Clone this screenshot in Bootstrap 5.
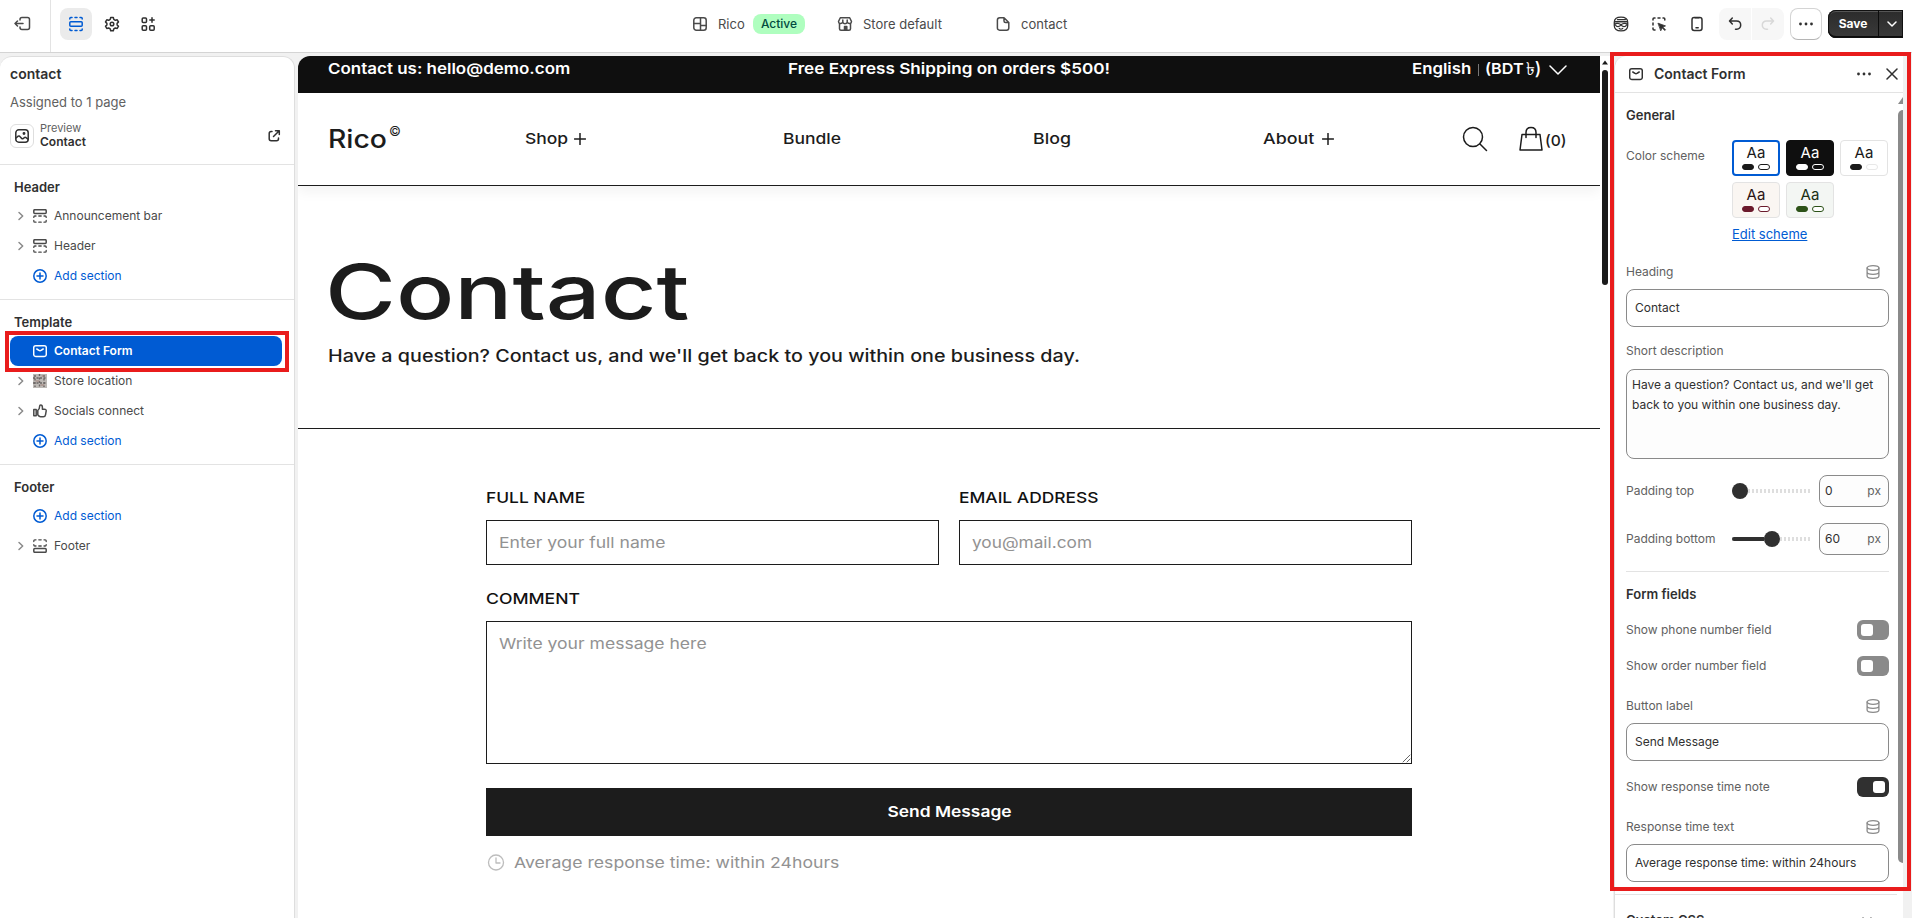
<!DOCTYPE html>
<html lang="en">
<head>
<meta charset="utf-8">
<title>Rico theme editor</title>
<link href="https://cdn.jsdelivr.net/npm/bootstrap@5.3.0/dist/css/bootstrap.min.css" rel="stylesheet">
<style>
body{font:400 12px/16px Inter,sans-serif;color:#303030;background:#f1f1f1;height:100vh;overflow:hidden}
svg{display:block;flex:none;fill:none;stroke:currentColor;stroke-width:1.5;stroke-linecap:round;stroke-linejoin:round}
.topbar{height:53px;background:#fff;border-bottom:1px solid #d4d4d4;font-size:13px;color:#4a4a4a}
.exit-cell{width:51px;height:52px;border-right:1px solid #e3e3e3;padding-left:14px}
.exit-cell svg{margin-bottom:5px}
.tile{width:32px;height:32px;border-radius:8px;display:flex;align-items:center;justify-content:center;color:#303030;flex:none}
.tile.on{background:#ebebeb;color:#005bd3;margin-left:-3px}
.active-pill{height:20px;width:52px;border-radius:8px;background:#affebf;color:#014b40;font-size:12px;font-weight:500;line-height:20px;text-align:center;padding:0}
.crumbs{left:692px;top:0;height:48px}
.crumbs .theme{width:35px;margin-left:10px}
.crumbs .shop-ico{margin:0 10px 0 32px}
.crumbs .shop-name{width:82px}
.crumbs .page-ico{margin:0 10px 0 50px}
.tools{left:1605px;top:8px}
.tools .gap6{margin-left:6px}
.undo{background:#f7f7f7;border-radius:8px 0 0 8px}
.redo{background:#f7f7f7;border-radius:0 8px 8px 0;color:#d8d8d8;margin-left:1px}
.more{border:1px solid #d4d4d4;border-bottom-color:#b5b5b5;margin:0 6px}
.save-group{height:28px;width:75px;border-radius:8px 0 0 8px;background:linear-gradient(#2b2b2b,#3a3a3a);box-shadow:inset 0 0 0 1px #111,inset 0 -2px 0 #0c0c0c,inset 0 2px 0 #555;color:#fff;font-weight:700;font-size:12px;overflow:hidden}
.save-group span{width:51px;text-align:center;border-right:1px solid #0c0c0c;line-height:28px}
.save-group svg{margin-left:8px}
.work{height:865px;padding-top:3px}
.side{width:295px;background:#fff;border:1px solid #dedede;border-left:0;border-bottom:0;border-radius:12px 12px 0 0}
.side-top{height:108px;padding:8px 18px 0 10px;border-bottom:1px solid #e3e3e3}
.side-title{font-size:14px;font-weight:600;line-height:18px}
.side-sub{font-size:13px;line-height:20px;margin-top:9px;color:#616161}
.preview{margin-top:9px;height:30px}
.preview-text{margin:-2px 0 0 6px;line-height:14px}
.preview-text div:first-child{font-size:11px;color:#616161}
.thumb{width:24px;height:24px;border:1px solid #dedede;border-radius:6px;display:flex;align-items:center;justify-content:center}
.open-ico{margin-right:-5px}
.group{padding-top:14px;border-bottom:1px solid #e3e3e3}
.group h6{font-size:13px;line-height:16px;font-weight:600;margin:0 0 6px 14px;color:#303030}
.item{height:30px;padding-left:16px;color:#4a4a4a}
.item .chev{width:8px;margin:0 8px 0 1px;color:#8a8a8a}
.item .ico{margin-right:7px;color:#4a4a4a}
.item.add,.item.add .ico{color:#005bd3}
.item.sel{margin:0 12px 0 10px;padding-left:6px;border-radius:8px;background:#005bd3;color:#fff;font-weight:600;position:relative}
.item.sel .ico{color:#fff}
.item.sel::after{content:"";position:absolute;left:-5px;right:-7px;top:-5px;bottom:-6px;border:4px solid #e91c1c}
.site{margin-left:3px;width:1302px;background:#fff;color:#1c1c1c;border-radius:12px 0 0 0;overflow:hidden;font-size:15px;line-height:20px}
.wide{display:inline-block;white-space:nowrap;transform:scaleX(var(--s,1.165));transform-origin:0 50%;font-weight:500;flex:none}
.announce{height:37px;background:#0f0f0f;color:#fff;padding:3px 0 0 30px}
.announce .wide{font-weight:600;--s:1.13}
.announce .c1{width:214px;--s:1.131}
.announce .c2{margin-left:246px;width:282px;--s:1.142}
.announce .c3{margin-left:342px;width:66px;--s:1.12}
.announce .sep{width:1px;height:12px;background:#777;margin-top:5px}
.announce .c4{margin-left:6px;width:40px;--s:1.08}
.announce .cur{font-weight:500;width:22px;font-size:18px;margin-left:1px;letter-spacing:-.2px}
.announce svg{margin:5px 0 0 1px}
.store-nav{height:93px;border-bottom:1px solid #1c1c1c;box-shadow:0 6px 12px rgba(0,0,0,.05);padding-left:30px;position:relative}
.store-nav .logo{font-size:25px;width:61px;line-height:30px;--s:1.134}
.store-nav .copy{font-size:13px;line-height:14px;margin-top:-16px;width:136px}
.store-nav .n1{width:49px}
.store-nav .n1+svg{margin-right:197px}
.store-nav .n2{width:250px}
.store-nav .n3{width:230px;--s:1.185}
.store-nav .n4{width:59px;--s:1.19}
.store-nav .find{margin-left:128px}
.store-nav .bag{margin-left:31px}
.store-nav .n5{--s:1.04;margin:4px 0 0 2px}
.hero{height:243px;padding:63px 0 0 30px;border-bottom:1px solid #1c1c1c}
.hero h1{font-size:76px;line-height:84px;--s:1.272;margin:0 0 0 -3px}
.hero p{font-size:17px;line-height:24px;--s:1.16;margin:11px 0 0}
.store-form{width:926px;margin:59px 0 0 188px}
.pair{grid-template-columns:1fr 1fr;column-gap:20px}
.fieldbox{border:1px solid #1c1c1c;color:#929292;padding:12px 0 0 12px;height:45px}
.fieldbox .wide{font-weight:400;--s:1.17}
.fieldbox .mail{--s:1.15}
.fieldbox.tall{height:143px}
.lab{line-height:20px;margin-bottom:12px;height:20px;color:#111}
.lab .wide{--s:1.158}
.lab.second{margin-top:24px}
.lab.second .wide{--s:1.174}
.send{height:48px;background:#1c1c1c;color:#fff;margin-top:24px}
.send .wide{font-weight:600;transform-origin:50% 50%;--s:1.16}
.note{margin-top:17px;color:#929292}
.note svg{margin:0 9px 0 1px;color:#bdbdbd;stroke-width:1.3}
.note .wide{font-weight:400;--s:1.176}
.vbar{width:13px;background:#fff}
.vbar svg{margin:4px 0 0 1px}
.vbar i{display:block;width:6px;height:215px;border-radius:3px;background:#1a1a1a;margin:5px 0 0 2px}
.rail{width:294px;margin-left:1px;position:relative}
.panel{width:289px;height:862px;background:#fff;border-left:1px solid #dedede;border-radius:12px 0 0 0;color:#616161;overflow:hidden}
.frame{position:absolute;left:-4px;top:-4px;width:301px;height:839px;border:4px solid #e91c1c}
.panel-head{height:37px;border-bottom:1px solid #e3e3e3;padding:0 5px 0 14px;color:#303030;font-size:14px;font-weight:600}
.panel-head span{margin-left:11px}
.panel-head .dots{margin-right:14px}
.panel-body{padding:14px 15px 0 11px;width:289px}
.panel-body h6{font-size:13px;line-height:16px;font-weight:600;color:#303030;margin:0}
.scheme{margin:17px -3px 0 0}
.scheme>span{padding-top:8px}
.scheme a{display:block;font-size:13px;line-height:16px;margin-top:8px;color:#005bd3}
.swatches{width:160px;display:flex;flex-wrap:wrap;gap:6px}
.sw{width:48px;height:36px;border:1px solid #e3e3e3;border-radius:4px;font-size:15px;line-height:16px;font-weight:400;text-align:center;padding-top:4px;color:#1a1a1a;--k:#1a1a1a}
.sw div{display:flex;gap:4px;justify-content:center;margin-top:3px}
.sw div::before,.sw div::after{content:"";width:12px;height:6px;border-radius:3px;background:var(--k);border:1px solid var(--k)}
.sw div::after{background:#fff;border-color:var(--o,var(--k))}
.sw.on{border:2px solid #005bd3;padding-top:3px}
.sw.dark{background:#0f0f0f;color:#fff;--k:#fff;border-color:#0f0f0f}
.sw.dark div::after{background:#0f0f0f}
.sw.plain{--o:#e8e8e8}
.sw.rose{background:#faf6f2;color:#2b1414;--k:#6b1a2c}
.sw.leaf{background:#f3f6f3;color:#1c2f14;--k:#2c5218}
.inp{height:38px;border:1px solid #8a8a8a;border-radius:8px;padding:0 8px;color:#303030;display:flex;align-items:center;background:#fff;margin-top:9px}
.area{height:90px;border:1px solid #8a8a8a;border-radius:8px;padding:5px;line-height:20px;color:#303030;background:#fdfdfd;margin-top:10px}
.lbl{height:16px;padding-right:8px;margin-top:22px}
.lbl svg{color:#8a8a8a;stroke-width:1.3}
.lbl.near{margin-top:16px}
.line{margin-top:16px}
.line.first{margin-top:18px}
.num{width:70px;height:32px;padding:0 7px 0 5px;background:#fdfdfd;margin:0}
.num span{color:#616161}
.slide{width:79px;height:16px;margin-right:8px;position:relative;display:flex;align-items:center;background:repeating-linear-gradient(90deg,#dedede 0 2px,transparent 2px 4px) 0 6px/100% 4px no-repeat}
.slide b{height:4px;background:#303030;border-radius:2px 0 0 2px}
.slide i{width:16px;height:16px;border-radius:50%;background:#303030}
.rule{border-top:1px solid #e3e3e3;margin:16px 0 14px}
.rule.full{margin:12px -8px 17px -11px}
.tog{width:32px;height:20px;border-radius:6px;background:#8a8a8a;padding:4px}
.tog i{display:block;width:12px;height:12px;border-radius:3px;background:#fff}
.tog.on{background:#303030}
.tog.on i{margin-left:12px}
.css-row{padding-right:17px}
.css-row svg{margin-top:5px}
.grip{position:absolute;left:284px;top:41px;color:#8a8a8a}
.grip i{display:block;width:5px;height:753px;margin-top:6px;background:#8a8a8a;border-radius:5px 0 0 5px}
</style>
</head>
<body>
<svg width="0" height="0" class="position-absolute">
<symbol id="chev" viewBox="0 0 8 10"><path d="M2 1.500 5.700 5 2 8.500"/></symbol>
<symbol id="top" viewBox="1 1 14 14"><rect x="1.800" y="1.700" width="12.400" height="3.800" rx="1"/><path d="M1.800 9.400V9c0-.6.4-1 1-1H4M6.800 8h2.400M12 8h1.200c.6 0 1 .4 1 1v.4M1.800 12.500v.7c0 .6.4 1 1 1H4M6.800 14.200h2.400M12 14.200h1.200c.6 0 1-.4 1-1v-.7" stroke-width="1.300"/></symbol>
<symbol id="bot" viewBox="1 1 14 14"><rect x="1.800" y="10.500" width="12.400" height="3.800" rx="1"/><path d="M1.800 6.600V7c0 .6.400 1 1 1H4M6.800 8h2.400M12 8h1.200c.6 0 1-.4 1-1v-.4M1.800 3.500v-.7c0-.6.400-1 1-1H4M6.800 1.800h2.400M12 1.800h1.200c.6 0 1 .4 1 1v.7" stroke-width="1.300"/></symbol>
<symbol id="plus" viewBox="1 1 14 14"><circle cx="8" cy="8" r="6.200"/><path d="M8 5v6M5 8h6"/></symbol>
<symbol id="mail" viewBox="1 1 14 14"><rect x="1.700" y="2.800" width="12.600" height="10.600" rx="2"/><path d="m4.800 6 2.200 1.400c.6.4 1.400.4 2 0L11.200 6"/></symbol>
<symbol id="data" viewBox="0 0 16 16"><ellipse cx="8" cy="4" rx="5.900" ry="2.300"/><path d="M2.100 4v8c0 1.300 2.600 2.300 5.900 2.300s5.900-1 5.900-2.300V4M2.100 8c0 1.300 2.600 2.300 5.900 2.300s5.900-1 5.900-2.300"/></symbol>
<symbol id="dots" viewBox="0 0 16 16"><g fill="currentColor" stroke="none"><circle cx="2.500" cy="8" r="1.400"/><circle cx="8" cy="8" r="1.400"/><circle cx="13.500" cy="8" r="1.400"/></g></symbol>
</svg>

<header class="topbar d-flex position-relative">
  <div class="exit-cell d-flex align-items-center"><svg width="18" height="16" viewBox="0 0 18 16"><path d="M6 4V3.500C6 2.300 6.800 1.500 8 1.500h5.500c1.200 0 2 .8 2 2v8c0 1.200-.8 2-2 2H8c-1.200 0-2-.8-2-2V11M9 7.500H1M3.500 5 1 7.500 3.500 10"/></svg></div>
  <nav class="d-flex gap-1 ps-2 pt-2 ms-1">
    <div class="tile on"><svg width="16" height="16"><rect x="1.800" y="5.700" width="12.400" height="4.600" rx="1"/><path d="M1.800 3V2.500c0-.6.4-1 1-1H4M7 1.500h2M12 1.500h1.200c.6 0 1 .4 1 1V3M1.800 13v.5c0 .6.4 1 1 1H4M7 14.500h2M12 14.500h1.200c.6 0 1-.4 1-1V13"/></svg></div>
    <div class="tile"><svg width="16" height="16"><path d="M6.700 1.500h2.600l.5 1.900 1.500.9 1.900-.5 1.300 2.200-1.400 1.400v1.500l1.400 1.300-1.300 2.300-1.900-.5-1.500.8-.5 1.900H6.700l-.5-1.900-1.500-.8-1.900.5-1.300-2.300 1.400-1.300V7.400L1.500 6l1.300-2.200 1.900.5 1.500-.9z"/><circle cx="8" cy="8" r="1.800"/></svg></div>
    <div class="tile"><svg width="16" height="16"><rect x="2.200" y="2" width="4.300" height="4.500" rx="1"/><rect x="2.200" y="9.700" width="4.300" height="4.500" rx="1"/><rect x="9.700" y="9.700" width="4.500" height="4.500" rx="1"/><path d="M12 1.800v4.400M9.800 4h4.400"/></svg></div>
  </nav>
  <div class="crumbs position-absolute d-flex align-items-center">
    <svg width="16" height="16"><rect x="1.800" y="1.800" width="12.400" height="12.400" rx="2.500"/><path d="M8.500 1.800v12.400M1.800 7.500h6.700M8.500 9.500h5.700"/></svg>
    <span class="theme">Rico</span>
    <span class="badge active-pill">Active</span>
    <svg class="shop-ico" width="16" height="16"><path d="M2.500 7.500v5.200c0 .9.500 1.500 1.500 1.500h8c1 0 1.500-.6 1.500-1.500V7.500M3.300 1.700h9.400L14.500 5.500c0 2.600-3.300 2.700-4.300.7-.8 2-3.600 2-4.400 0-1 2-4.300 1.900-4.300-.7zM5.800 4v2M10.200 4v2"/><path d="M7.500 10.500h2.300v3.500H7.500z" fill="currentColor"/></svg>
    <span class="shop-name">Store default</span>
    <svg class="page-ico" width="16" height="16"><path d="M4.800 1.700H9L13.800 6.500v5.500c0 1.300-.9 2.200-2.200 2.200H4.600c-1.300 0-2.200-.9-2.200-2.200V4c0-1.400.9-2.300 2.400-2.300zM9 2v3c0 .9.500 1.500 1.500 1.500h3"/></svg>
    <span>contact</span>
  </div>
  <div class="tools position-absolute d-flex align-items-center">
    <div class="tile"><svg width="16" height="16"><path d="M1.300 6.200C1.300 3 3.500 1.200 8 1.200s6.700 1.800 6.700 5v3.500c0 3-2.300 5.100-6.700 5.100s-6.700-2.100-6.700-5.100zM6.300 12.500c.9.700 2.500.7 3.400 0" stroke-width="1.300"/><path d="M2.200 5.800h11.600M4.500 3.600h8" stroke-width="1.400"/><path d="M1.500 8c2-.8 4.800-.7 6.500.8 1.700-1.500 4.500-1.600 6.500-.8M8 8.800c-1.200 2.200-4.500 2.400-5.500.2M8 8.800c1.200 2.200 4.500 2.400 5.500.2" stroke-width="1.200"/></svg></div>
    <div class="tile gap6"><svg width="16" height="16"><path d="M2 4V3c0-.7.400-1 1-1h1M7 2h2M12 2h.8c.7 0 1 .3 1 1v1M2 7v2M2 12v1c0 .7.400 1 1 1h1"/><path d="m7.300 7.300 7.200 2.600-2.700 1.200 2.700 2.700-.7.700-2.700-2.700-1.200 2.700z" fill="currentColor" stroke-width=".8"/></svg></div>
    <div class="tile gap6"><svg width="16" height="16"><rect x="3" y="1.500" width="10" height="13" rx="2.200"/><path d="M7 11.800h2.200M6 1.800h4"/></svg></div>
    <div class="tile undo gap6"><svg width="16" height="16"><path d="M5.300 2 2.500 5l2.800 3M2.800 5H9.500c2.500 0 4.200 1.700 4.200 4s-1.700 4.200-4 4.200H8.500"/></svg></div>
    <div class="tile redo"><svg width="16" height="16"><path d="M10.700 2l2.800 3-2.800 3M13.200 5H6.500C4 5 2.300 6.700 2.300 9s1.700 4.200 4 4.200h1.200"/></svg></div>
    <div class="tile more"><svg width="16" height="16"><use href="#dots"/></svg></div>
    <div class="save-group d-flex align-items-center"><span>Save</span><svg width="10" height="8" viewBox="0 0 10 8"><path d="m1 2 4 4 4-4"/></svg></div>
  </div>
</header>

<div class="work d-flex">
  <aside class="side flex-shrink-0">
    <div class="side-top">
      <div class="side-title">contact</div>
      <div class="side-sub">Assigned to 1 page</div>
      <div class="preview d-flex align-items-center">
        <div class="thumb"><svg width="16" height="16"><rect x="1.800" y="1.800" width="12.400" height="12.400" rx="3"/><path d="m2 10 2.200-1.800c.6-.5 1.200-.4 1.700.2l1.800 2c.5.500 1 .6 1.600.1l1-.9c.5-.5 1.200-.5 1.700 0l2 1.600"/><circle cx="10" cy="5.500" r=".7"/></svg></div>
        <div class="preview-text"><div>Preview</div><div class="fw-semibold">Contact</div></div>
        <svg class="ms-auto open-ico" width="14" height="14" viewBox="0 0 14 14"><path d="M5 2.500H4.200c-1.200 0-2 .8-2 2v5.300c0 1.200.8 2 2 2h5.300c1.200 0 2-.8 2-2V9M8.500 1.700h3.800v3.800M12 2 6.500 7.500"/></svg>
      </div>
    </div>
    <section class="group" style="height:135px"><h6>Header</h6>
      <div class="item d-flex align-items-center"><svg class="chev" width="8" height="10"><use href="#chev"/></svg><svg class="ico" width="14" height="14"><use href="#top"/></svg>Announcement bar</div>
      <div class="item d-flex align-items-center"><svg class="chev" width="8" height="10"><use href="#chev"/></svg><svg class="ico" width="14" height="14"><use href="#top"/></svg>Header</div>
      <div class="item add d-flex align-items-center"><span class="chev"></span><svg class="ico" width="14" height="14"><use href="#plus"/></svg>Add section</div>
    </section>
    <section class="group" style="height:165px"><h6>Template</h6>
      <div class="item sel d-flex align-items-center"><span class="chev"></span><svg class="ico" width="14" height="14"><use href="#mail"/></svg>Contact Form</div>
      <div class="item d-flex align-items-center"><svg class="chev" width="8" height="10"><use href="#chev"/></svg><svg class="ico" width="14" height="14"><rect width="14" height="14" fill="#bdb9b5" stroke="none"/><path d="M2 1v12M6.500 0v14M11 1v12M0 4h14M0 9h14" stroke="#6a6564" stroke-width="1.400" stroke-linecap="butt" stroke-dasharray="2 1.500"/><path d="M3 7h3M8 11h3M9 2h2" stroke="#9d7f76" stroke-width="1"/></svg>Store location</div>
      <div class="item d-flex align-items-center"><svg class="chev" width="8" height="10"><use href="#chev"/></svg><svg class="ico" width="14" height="14"><path d="M.8 5.500h2.400v6.300H.8zM4.800 10.800V6.300c1.300-.7 1.800-1.800 1.800-3.800 0-1 .4-1.600 1.100-1.600 1 0 1.700 1 1.700 2.300v2h2.100c1.200 0 1.800.7 1.700 1.700l-.7 3.900c-.2 1.200-1 1.900-2.200 1.900H7.500c-1.400 0-1.900-.8-2.700-1.900z" stroke-width="1.500"/></svg>Socials connect</div>
      <div class="item add d-flex align-items-center"><span class="chev"></span><svg class="ico" width="14" height="14"><use href="#plus"/></svg>Add section</div>
    </section>
    <section class="group border-0"><h6>Footer</h6>
      <div class="item add d-flex align-items-center"><span class="chev"></span><svg class="ico" width="14" height="14"><use href="#plus"/></svg>Add section</div>
      <div class="item d-flex align-items-center"><svg class="chev" width="8" height="10"><use href="#chev"/></svg><svg class="ico" width="14" height="14"><use href="#bot"/></svg>Footer</div>
    </section>
  </aside>

  <main class="site flex-shrink-0">
    <div class="announce d-flex">
      <span class="wide c1">Contact us: hello@demo.com</span>
      <span class="wide c2">Free Express Shipping on orders $500!</span>
      <span class="wide c3">English</span>
      <span class="sep"></span>
      <span class="wide c4">(BDT</span>
      <span class="cur">৳)</span>
      <svg width="18" height="12" viewBox="0 0 18 12"><path d="m1 2 8 8 8-8"/></svg>
    </div>
    <div class="store-nav d-flex align-items-center">
      <span class="wide logo">Rico</span>
      <span class="copy">©</span>
      <span class="wide n1">Shop</span>
      <svg width="12" height="12"><path d="M6 .5v11M.5 6h11"/></svg>
      <span class="wide n2">Bundle</span>
      <span class="wide n3">Blog</span>
      <span class="wide n4">About</span>
      <svg width="12" height="12"><path d="M6 .5v11M.5 6h11"/></svg>
      <svg class="find" width="26" height="26" viewBox="0 0 26 26"><circle cx="11" cy="11" r="9.500"/><path d="m18 18 6.500 6.500"/></svg>
      <svg class="bag" width="24" height="26" viewBox="0 0 24 26"><path d="M3 8.500h18l2 15.500H1zM7 11.500V6.500C7 3.500 9 1.500 12 1.500s5 2 5 5v5"/></svg>
      <span class="wide n5">(0)</span>
    </div>
    <div class="hero">
      <h1 class="wide">Contact</h1><br>
      <p class="wide">Have a question? Contact us, and we'll get back to you within one business day.</p>
    </div>
    <div class="store-form">
      <div class="d-grid pair">
        <div><div class="lab"><span class="wide">FULL NAME</span></div><div class="fieldbox"><span class="wide">Enter your full name</span></div></div>
        <div><div class="lab"><span class="wide">EMAIL ADDRESS</span></div><div class="fieldbox"><span class="wide mail">you@mail.com</span></div></div>
      </div>
      <div class="lab second"><span class="wide">COMMENT</span></div>
      <div class="fieldbox tall position-relative"><span class="wide">Write your message here</span><svg class="position-absolute bottom-0 end-0" width="9" height="9"><path d="M1 8 8 1M5 8l3-3" stroke="#555" stroke-width=".9"/></svg></div>
      <div class="send d-flex align-items-center justify-content-center"><span class="wide">Send Message</span></div>
      <div class="note d-flex align-items-center"><svg width="18" height="18"><circle cx="9" cy="8.500" r="7.500"/><path d="M9 4v5h4"/></svg><span class="wide">Average response time: within 24hours</span></div>
    </div>
  </main>
  <div class="vbar flex-shrink-0"><svg width="8" height="5"><path d="M1 4.500 4 .5l3 4z" fill="#1a1a1a" stroke="none"/></svg><i></i></div>

  <aside class="rail flex-shrink-0">
    <div class="panel">
      <div class="panel-head d-flex align-items-center"><svg width="14" height="14"><use href="#mail"/></svg><span class="me-auto">Contact Form</span><svg class="dots" width="16" height="16"><use href="#dots"/></svg><svg width="12" height="12"><path d="m1 1 10 10M11 1 1 11"/></svg></div>
      <div class="panel-body">
        <h6>General</h6>
        <div class="scheme d-flex justify-content-between"><span>Color scheme</span>
          <div><div class="swatches"><div class="sw on">Aa<div></div></div><div class="sw dark">Aa<div></div></div><div class="sw plain">Aa<div></div></div><div class="sw rose">Aa<div></div></div><div class="sw leaf">Aa<div></div></div></div>
          <a href="#">Edit scheme</a></div></div>
        <div class="lbl d-flex justify-content-between">Heading<svg width="16" height="16"><use href="#data"/></svg></div>
        <div class="inp">Contact</div>
        <div class="lbl near">Short description</div>
        <div class="area">Have a question? Contact us, and we'll get<br>back to you within one business day.</div>
        <div class="line d-flex align-items-center"><span class="me-auto">Padding top</span><div class="slide"><i></i></div><div class="inp num">0<span class="ms-auto">px</span></div></div>
        <div class="line d-flex align-items-center"><span class="me-auto">Padding bottom</span><div class="slide"><b style="width:32px"></b><i></i></div><div class="inp num">60<span class="ms-auto">px</span></div></div>
        <div class="rule"></div>
        <h6>Form fields</h6>
        <div class="line first d-flex align-items-center justify-content-between">Show phone number field<div class="tog"><i></i></div></div>
        <div class="line d-flex align-items-center justify-content-between">Show order number field<div class="tog"><i></i></div></div>
        <div class="lbl d-flex justify-content-between">Button label<svg width="16" height="16"><use href="#data"/></svg></div>
        <div class="inp">Send Message</div>
        <div class="line d-flex align-items-center justify-content-between">Show response time note<div class="tog on"><i></i></div></div>
        <div class="lbl d-flex justify-content-between">Response time text<svg width="16" height="16"><use href="#data"/></svg></div>
        <div class="inp">Average response time: within 24hours</div>
        <div class="rule full"></div>
        <div class="css-row d-flex justify-content-between"><h6>Custom CSS</h6><svg width="10" height="8" viewBox="0 0 10 8"><path d="m1 1 4 4 4-4"/></svg></div>
      </div>
    </div>
    <div class="grip"><svg width="5" height="7"><path d="M0 7 5 0v7z" fill="#8a8a8a" stroke="none"/></svg><i></i></div>
    <div class="frame"></div>
  </aside>
</div>
<script src="https://cdn.jsdelivr.net/npm/bootstrap@5.3.0/dist/js/bootstrap.bundle.min.js"></script>
</body>
</html>
